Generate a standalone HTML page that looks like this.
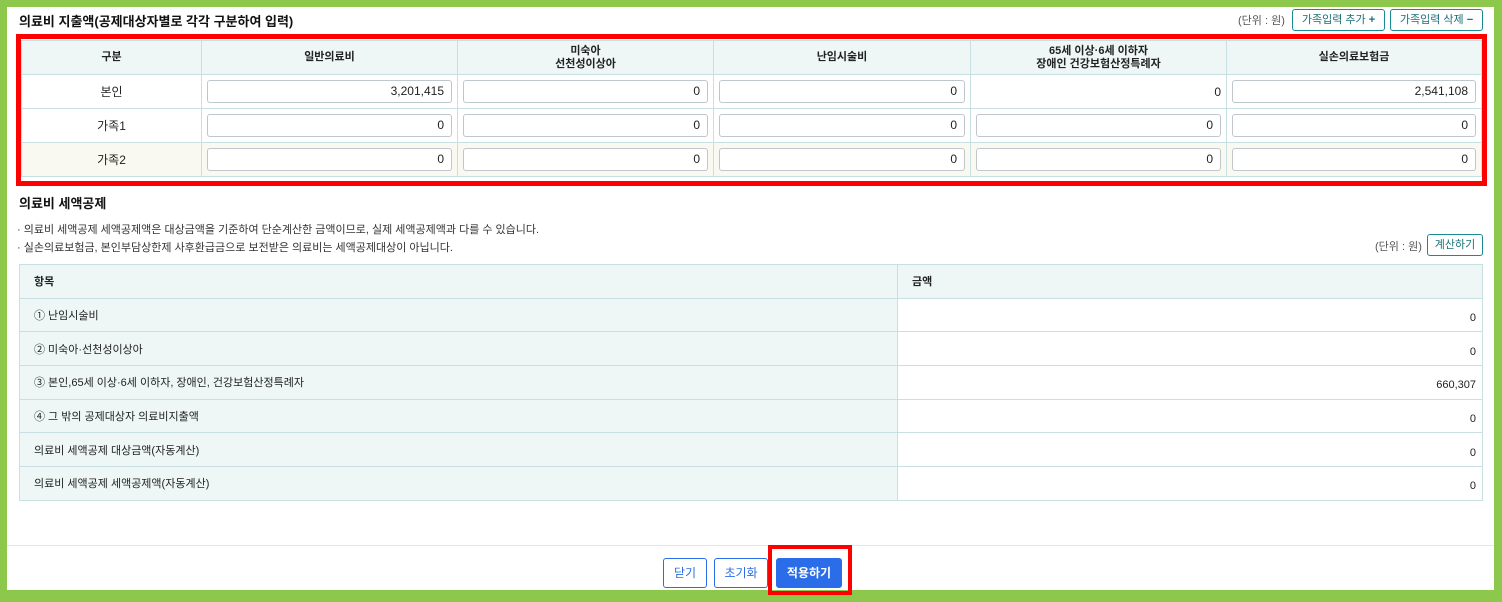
<!DOCTYPE html>
<html><head><meta charset="utf-8"><style>
*{box-sizing:border-box;margin:0;padding:0}
body{width:1502px;height:602px;background:#8cc84b;font-family:"Liberation Sans","Noto Sans CJK KR",sans-serif;color:#222;position:relative;overflow:hidden}
.w{position:absolute;left:7px;top:7px;width:1487px;height:583px;background:#fff}
.a{position:absolute}
.t{font-size:13px;font-weight:bold;color:#111}
.btn{position:absolute;border:1px solid #1a8a92;border-radius:3px;background:#fff;font-size:11px;color:#1a6f76;text-align:center;line-height:20px;height:22px}
table{border-collapse:collapse;position:absolute}
td{border:1px solid #c8e0e4;font-size:11px}
.t1 td{text-align:center;height:34px;font-size:12px}
.t1 tr:first-child td{background:#eef7f6;font-weight:bold;line-height:13px;font-size:11px}
.t1 tr.y td{background:#f9f9f1}
.inp{margin:0 5px;height:23px;border:1px solid #bfc6cc;border-radius:3px;background:#fff;text-align:right;padding-right:7px;line-height:21px;font-size:12px}
.t2 td{height:33.7px;padding:0 14px}
.t2 td:first-child{background:#eef7f6}
.t2 td:last-child{text-align:right;padding-right:6px;padding-top:6px}
.note{font-size:11px;color:#333}
</style></head><body>
<div class="w"></div>
<div class="a t" style="left:19px;top:11px">의료비 지출액(공제대상자별로 각각 구분하여 입력)</div>
<div class="a" style="left:1238px;top:12px;font-size:11px;color:#555">(단위 : 원)</div>
<div class="btn" style="left:1292px;top:9px;width:93px">가족입력 추가 <b>+</b></div>
<div class="btn" style="left:1390px;top:9px;width:93px">가족입력 삭제 <b>−</b></div>
<div class="a" style="left:16px;top:34px;width:1471px;height:152px;border:5px solid #f00"></div>
<table class="t1" style="left:21px;top:40px;width:1461px">
<tr><td style="width:180px">구분</td><td style="width:256px">일반의료비</td><td style="width:256px">미숙아<br>선천성이상아</td><td style="width:257px">난임시술비</td><td style="width:256px">65세 이상·6세 이하자<br>장애인 건강보험산정특례자</td><td>실손의료보험금</td></tr>
<tr><td>본인</td><td><div class="inp">3,201,415</div></td><td><div class="inp">0</div></td><td><div class="inp">0</div></td><td style="text-align:right;padding-right:5px;font-size:12px">0</td><td><div class="inp">2,541,108</div></td></tr>
<tr><td>가족1</td><td><div class="inp">0</div></td><td><div class="inp">0</div></td><td><div class="inp">0</div></td><td><div class="inp">0</div></td><td><div class="inp">0</div></td></tr>
<tr class="y"><td>가족2</td><td><div class="inp">0</div></td><td><div class="inp">0</div></td><td><div class="inp">0</div></td><td><div class="inp">0</div></td><td><div class="inp">0</div></td></tr>
</table>
<div class="a t" style="left:19px;top:193px">의료비 세액공제</div>
<div class="a note" style="left:17px;top:221px">· 의료비 세액공제 세액공제액은 대상금액을 기준하여 단순계산한 금액이므로, 실제 세액공제액과 다를 수 있습니다.</div>
<div class="a note" style="left:17px;top:239px">· 실손의료보험금, 본인부담상한제 사후환급금으로 보전받은 의료비는 세액공제대상이 아닙니다.</div>
<div class="a" style="left:1375px;top:238px;font-size:11px;color:#555">(단위 : 원)</div>
<div class="btn" style="left:1427px;top:234px;width:56px">계산하기</div>
<table class="t2" style="left:19px;top:264px;width:1464px">
<tr><td style="width:878px;font-weight:bold">항목</td><td style="background:#eef7f6;text-align:left;padding:0 14px;font-weight:bold">금액</td></tr>
<tr><td>① 난임시술비</td><td>0</td></tr>
<tr><td>② 미숙아·선천성이상아</td><td>0</td></tr>
<tr><td>③ 본인,65세 이상·6세 이하자, 장애인, 건강보험산정특례자</td><td>660,307</td></tr>
<tr><td>④ 그 밖의 공제대상자 의료비지출액</td><td>0</td></tr>
<tr><td>의료비 세액공제 대상금액(자동계산)</td><td>0</td></tr>
<tr><td>의료비 세액공제 세액공제액(자동계산)</td><td>0</td></tr>
</table>
<div class="a" style="left:7px;top:545px;width:1487px;height:1px;background:#e6e6ee"></div>
<div class="btn" style="left:663px;top:558px;width:44px;height:30px;line-height:28px;border-color:#2b6de8;color:#2b6de8;font-size:12px">닫기</div>
<div class="btn" style="left:714px;top:558px;width:54px;height:30px;line-height:28px;border-color:#2b6de8;color:#2b6de8;font-size:12px">초기화</div>
<div class="a" style="left:768px;top:545px;width:84px;height:50px;border:4px solid #f00"></div>
<div class="btn" style="left:776px;top:558px;width:66px;height:30px;line-height:28px;border-color:#2b6de8;background:#2b6de8;color:#fff;font-size:12px;font-weight:bold">적용하기</div>
</body></html>
